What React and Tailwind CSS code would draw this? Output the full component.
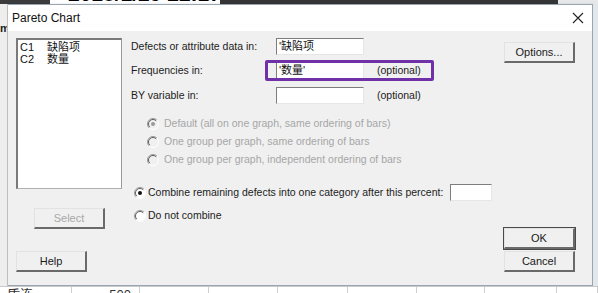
import React from "react";

const FONT = "font-['Liberation_Sans','Noto_Sans_CJK_SC',sans-serif]";

function Radio({ checked, disabled }) {
  return (
    <svg width="12" height="12" viewBox="0 0 12 12" className="shrink-0">
      <circle cx="6" cy="6" r="5" fill={disabled ? "#f0f0f0" : "#ffffff"} />
      <path d="M2.1 9.9 A5.5 5.5 0 0 1 9.9 2.1" fill="none" stroke="#9a9a9a" strokeWidth="1" />
      <path d="M2.8 9.2 A4.5 4.5 0 0 1 9.2 2.8" fill="none" stroke="#5f5f5f" strokeWidth="1" />
      <path d="M9.9 2.1 A5.5 5.5 0 0 1 2.1 9.9" fill="none" stroke="#ffffff" strokeWidth="1" />
      {checked && <circle cx="6" cy="6" r="2" fill={disabled ? "#9a9a9a" : "#111111"} />}
    </svg>
  );
}

function Button({ children, disabled, isDefault, className = "" }) {
  return (
    <div
      className={`h-[21px] w-[71px] flex items-center justify-center bg-[#f0f0f0] text-[11px] border-t border-l border-r-2 border-b-2 border-t-[#e2e2e2] border-l-[#e2e2e2] border-r-[#6a6a6a] border-b-[#6a6a6a] ${
        isDefault ? "outline outline-1 outline-[#4a4a4a]" : ""
      } ${disabled ? "text-[#a8a8a8]" : "text-[#1a1a1a]"} ${className}`}
    >
      {children}
    </div>
  );
}

function Field({ value, className = "" }) {
  return (
    <div
      className={`h-[17px] bg-white border-t border-l border-t-[#7d7d7d] border-l-[#7d7d7d] border-r border-b border-r-[#e6e6e6] border-b-[#e6e6e6] flex items-center pl-[2px] text-[11px] text-[#111] ${className}`}
    >
      {value}
    </div>
  );
}

export default function App() {
  const gridCols = [72, 68, 69, 69, 70, 69, 68, 72, 41];

  return (
    <div className={`w-[598px] h-[293px] overflow-hidden bg-[#e8eaec] flex flex-col ${FONT}`}>
      {/* window behind: top edge */}
      <div className="h-[4px] flex overflow-hidden shrink-0">
        <div className="w-[50px] bg-[#3c3c3c]" />
        <div className="w-[170px] bg-white overflow-hidden">
          <div className="-mt-[17px] ml-[18px] text-[21px] leading-[21px] font-bold text-black whitespace-nowrap">
            2018/1/29 22:17:31
          </div>
        </div>
        <div className="w-[338px] bg-[#353535]" />
        <div className="flex-1 bg-[#e6e8ea]" />
      </div>

      <div className="flex h-[282px] shrink-0">
        {/* sliver of the sheet on the left */}
        <div className="w-[8px] bg-[#eeeeee] border-r border-[#c8c8c8] overflow-hidden">
          <div className="mt-[19px] text-[11px] font-bold leading-none text-[#222]">m</div>
        </div>

        {/* dialog */}
        <div className="w-[585px] flex flex-col border border-l-0 border-[#9aa5b3] bg-[#f0f0f0] shadow-[1px_1px_3px_rgba(0,0,0,0.25)]">
          <div className="h-[26px] bg-white flex items-center justify-between pl-[4px] pr-[8px] shrink-0">
            <span className="text-[12px] text-[#111]">Pareto Chart</span>
            <svg width="12" height="12" viewBox="0 0 12 12">
              <path d="M1 1 L11 11 M11 1 L1 11" stroke="#222" strokeWidth="1.1" />
            </svg>
          </div>

          <div className="flex-1 flex pl-[8px] pt-[7px]">
            {/* variables list + Select + Help */}
            <div className="w-[106px] flex flex-col">
              <div className="h-[151px] bg-white border border-t-2 border-l-2 border-[#7a7a7a] border-r-[#9a9a9a] border-b-[#b0b0b0] pt-[1px] pl-[2px] text-[11px] leading-[12px] text-[#111]">
                <div className="flex">
                  <span className="w-[27px]">C1</span>
                  <span>缺陷项</span>
                </div>
                <div className="flex">
                  <span className="w-[27px]">C2</span>
                  <span>数量</span>
                </div>
              </div>
              <Button disabled className="ml-[18px] mt-[19px]">
                Select
              </Button>
              <Button className="mt-[22px]">Help</Button>
            </div>

            {/* main options */}
            <div className="relative w-[373px] ml-[9px] flex flex-col text-[10.5px] text-[#1c1c1c]">
              <div className="h-[17px] flex items-center">
                <span className="w-[145px]">Defects or attribute data in:</span>
                <Field value="'缺陷项" className="w-[88px]" />
              </div>
              <div className="h-[17px] mt-[7px] flex items-center">
                <span className="w-[145px]">Frequencies in:</span>
                <Field value="'数量'" className="w-[88px]" />
                <span className="ml-[13px]">(optional)</span>
              </div>
              <div className="h-[17px] mt-[8px] flex items-center">
                <span className="w-[145px]">BY variable in:</span>
                <Field value="" className="w-[88px]" />
                <span className="ml-[13px]">(optional)</span>
              </div>

              <div className="mt-[11px] pl-[16px] flex flex-col text-[#a6a6a6]">
                <div className="h-[18px] flex items-center gap-[5px]">
                  <Radio checked disabled />
                  <span>Default (all on one graph, same ordering of bars)</span>
                </div>
                <div className="h-[18px] flex items-center gap-[5px]">
                  <Radio disabled />
                  <span>One group per graph, same ordering of bars</span>
                </div>
                <div className="h-[18px] flex items-center gap-[5px]">
                  <Radio disabled />
                  <span>One group per graph, independent ordering of bars</span>
                </div>
              </div>

              <div className="h-[17px] mt-[15px] pl-[3px] flex items-center">
                <Radio checked />
                <span className="ml-[2px]">Combine remaining defects into one category after this percent:</span>
                <Field value="" className="w-[42px] ml-[7px]" />
              </div>
              <div className="h-[17px] mt-[6px] pl-[3px] flex items-center">
                <Radio />
                <span className="ml-[2px]">Do not combine</span>
              </div>

              {/* annotation box drawn over the Frequencies row */}
              <div className="absolute left-[134px] top-[22px] w-[169px] h-[21px] border-[3px] border-[#7030a8] rounded-[2px]" />
            </div>

            {/* right hand buttons */}
            <div className="w-[71px] flex flex-col">
              <Button className="mt-[4px]">Options...</Button>
              <Button isDefault className="mt-[165px]">
                OK
              </Button>
              <Button className="mt-[2px]">Cancel</Button>
            </div>
          </div>
        </div>

        <div className="flex-1 bg-[#e4e7ea]" />
      </div>

      {/* worksheet grid visible under the dialog */}
      <div className="flex-1 bg-white border-t border-[#c9c9c9] flex overflow-hidden">
        {gridCols.map((w, i) => (
          <div
            key={i}
            style={{ width: w }}
            className="border-r border-[#cfcfcf] shrink-0 overflow-hidden text-[13px] leading-[13px] pt-[1px] text-[#333]"
          >
            {i === 0 && <span className="pl-[7px]">盾连</span>}
            {i === 1 && <div className="text-right pr-[8px]">500</div>}
          </div>
        ))}
      </div>
    </div>
  );
}
